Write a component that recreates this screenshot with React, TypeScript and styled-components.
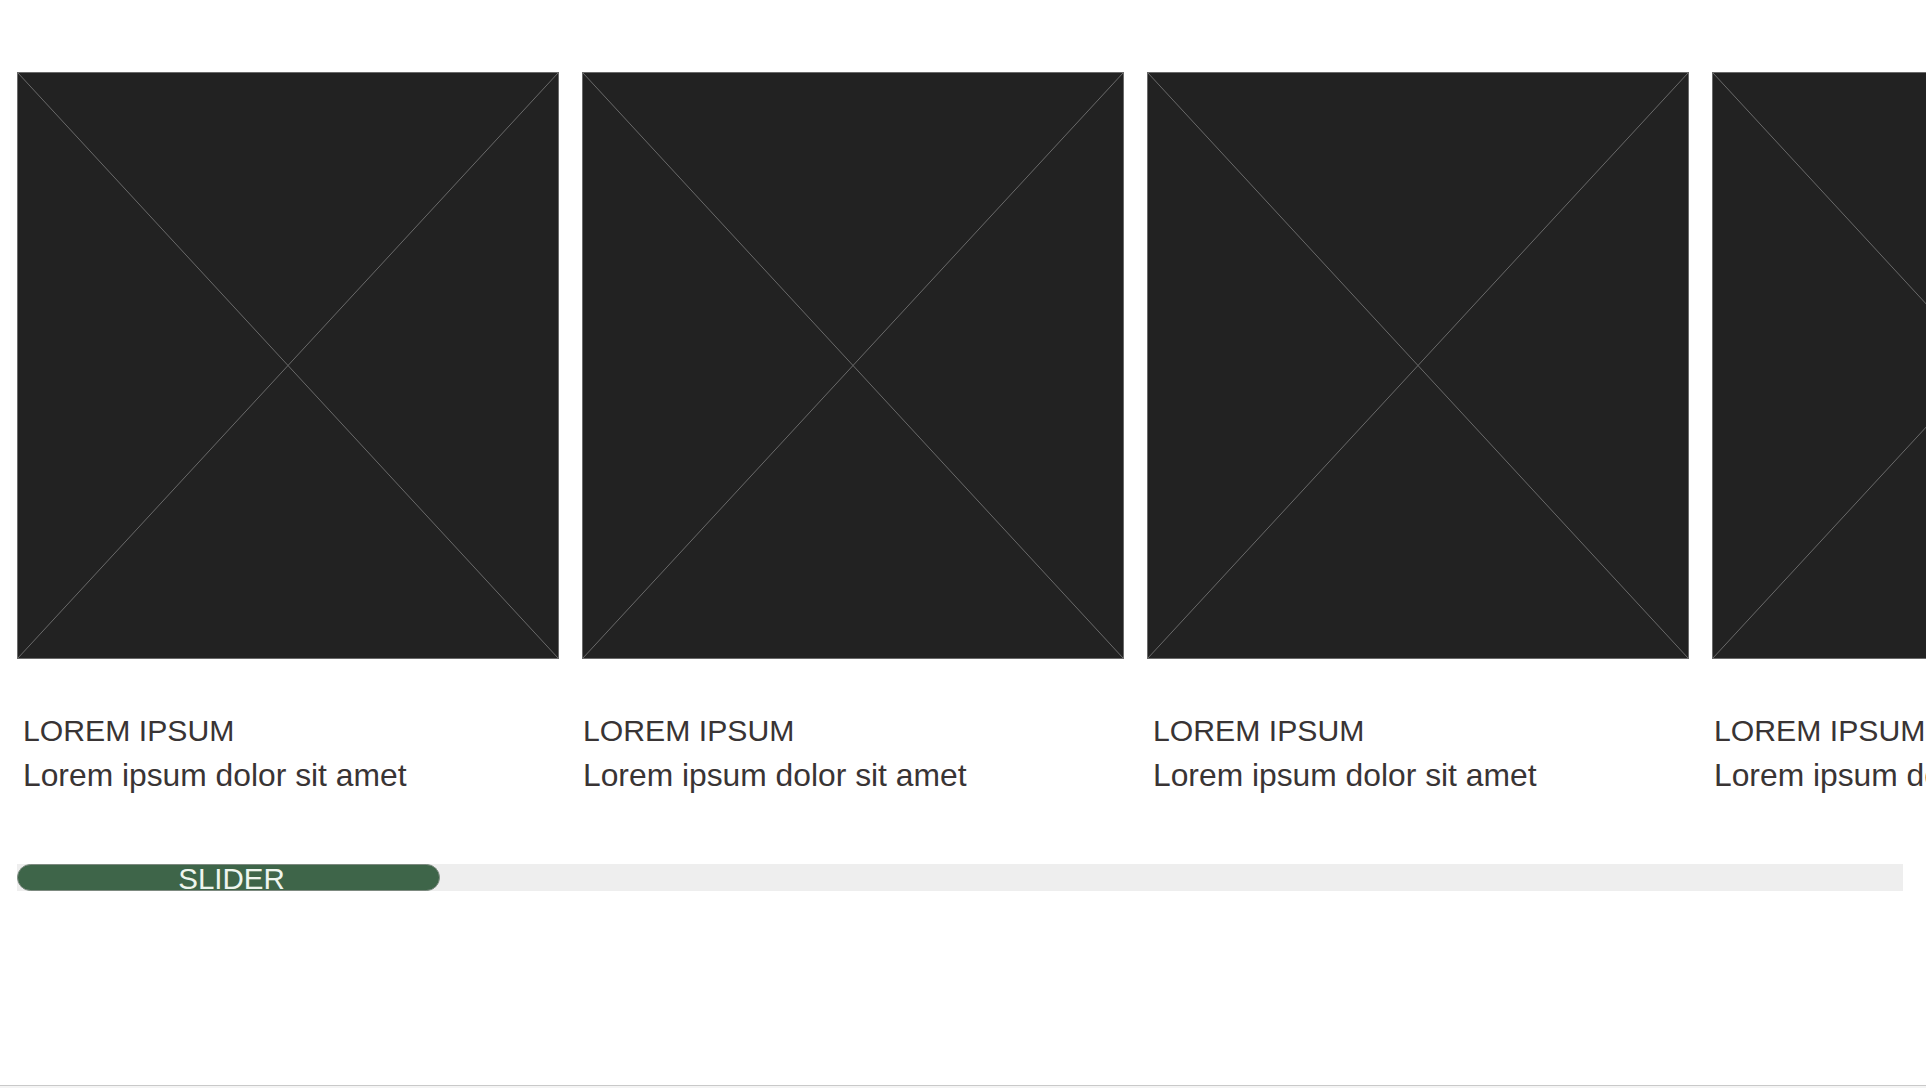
import React from "react";
import styled, { createGlobalStyle } from "styled-components";

const GlobalStyle = createGlobalStyle`
  html, body {
    margin: 0;
    padding: 0;
    background: #ffffff;
    overflow: hidden;
  }
  body {
    font-family: "Liberation Sans", Arial, sans-serif;
  }
`;

const Page = styled.div`
  min-height: 100vh;
  display: flex;
  flex-direction: column;
  box-sizing: border-box;
`;

const Content = styled.main`
  padding: 72px 0 0 17px;
  display: flex;
  flex-direction: column;
  overflow: hidden;
`;

const CardRow = styled.div`
  display: flex;
  gap: 23px;
  width: max-content;
`;

const Card = styled.article`
  width: 542px;
  flex: 0 0 542px;
  display: flex;
  flex-direction: column;
`;

const Placeholder = styled.div`
  width: 100%;
  height: 587px;
  box-sizing: border-box;
  background: #222222;
  border: 1px solid #6a6a6a;

  svg {
    display: block;
    width: 100%;
    height: 100%;
  }
`;

const Info = styled.div<{ $inset: number }>`
  margin-top: 50px;
  padding-left: ${(p) => p.$inset}px;
  color: #393434;
`;

const Title = styled.h3`
  margin: 0;
  font-weight: 400;
  font-size: 30.2px;
  line-height: 44px;
  text-transform: uppercase;
`;

const Caption = styled.p`
  margin: 0;
  font-weight: 400;
  font-size: 31.8px;
  line-height: 44px;
  white-space: nowrap;
`;

const Track = styled.div`
  margin-top: 67px;
  width: 1886px;
  height: 27px;
  background: #eeeeee;
  display: flex;
`;

const Thumb = styled.div`
  height: 27px;
  box-sizing: border-box;
  background: #3e6549;
  border: 1px solid #7d8a80;
  border-radius: 14px;
  color: #eef5ee;
  font-size: 29.5px;
  line-height: 25px;
  padding: 1px 0 0 6px;
  text-align: center;
  overflow: visible;
  white-space: nowrap;
`;

const BottomEdge = styled.div`
  margin-top: auto;
  height: 3px;
  box-sizing: border-box;
  border-top: 1px solid #c9c9c9;
  background: #f4f4f4;
`;

const Cross = () => (
  <svg viewBox="0 0 100 100" preserveAspectRatio="none">
    <line x1="0" y1="0" x2="100" y2="100" stroke="#6a6a6a" strokeWidth="1" vectorEffect="non-scaling-stroke" />
    <line x1="100" y1="0" x2="0" y2="100" stroke="#6a6a6a" strokeWidth="1" vectorEffect="non-scaling-stroke" />
  </svg>
);

const items = [
  { inset: 6 },
  { inset: 1 },
  { inset: 6 },
  { inset: 2 },
];

export default function App() {
  const position = 423 / 1886;
  return (
    <>
      <GlobalStyle />
      <Page>
        <Content>
          <CardRow>
            {items.map((item, i) => (
              <Card key={i}>
                <Placeholder>
                  <Cross />
                </Placeholder>
                <Info $inset={item.inset}>
                  <Title>Lorem ipsum</Title>
                  <Caption>Lorem ipsum dolor sit amet</Caption>
                </Info>
              </Card>
            ))}
          </CardRow>
          <Track>
            <Thumb style={{ width: `${position * 100}%` }}>SLIDER</Thumb>
          </Track>
        </Content>
        <BottomEdge />
      </Page>
    </>
  );
}
